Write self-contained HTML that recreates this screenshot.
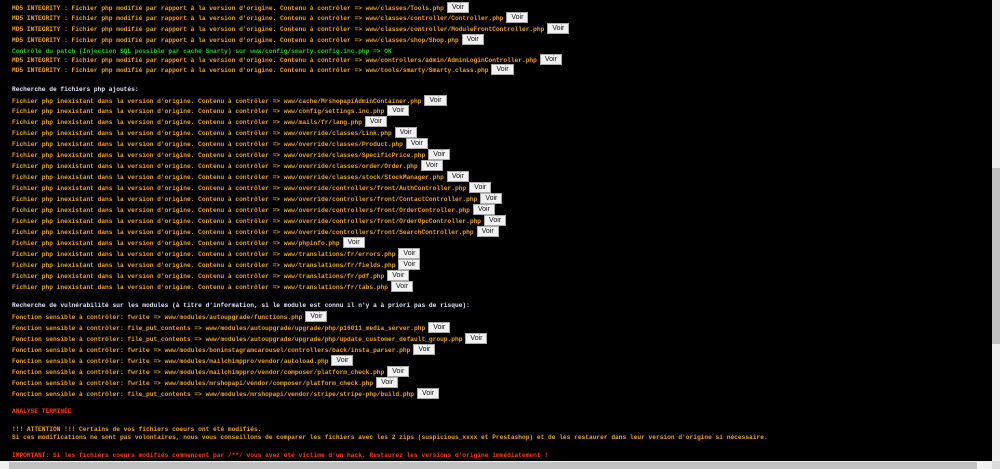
<!DOCTYPE html>
<html><head><meta charset="utf-8"><style>
html,body{margin:0;padding:0;background:#000;width:1000px;height:469px;overflow:hidden;}
.l{position:absolute;left:12px;height:11px;line-height:11px;font-family:"Liberation Mono",monospace;font-weight:bold;font-size:6.21px;white-space:pre;color:#f0a020;}
.g{color:#1fcc1f}.h{color:#dfe6ff}.r{color:#ff3a10}
.b{display:inline-block;vertical-align:middle;margin-left:3px;height:9px;line-height:9px;padding:0 4px;background:#f2f2f2;border:1px solid #aaa;color:#111;font-family:"Liberation Sans",sans-serif;font-weight:normal;font-size:7px;position:relative;top:-1px}
#vs{position:absolute;left:992px;top:0;width:8px;height:461px;background:#f0f0f0}
#vt{position:absolute;left:992px;top:168px;width:8px;height:176px;background:#c2c2c2}
#hs{position:absolute;left:0;top:461px;width:992px;height:8px;background:#f0f0f0}
#ht{position:absolute;left:9px;top:462px;width:968px;height:7px;background:#c2c2c2}
#cn{position:absolute;left:992px;top:461px;width:8px;height:8px;background:#dcdcdc}
</style></head><body>
<div class="l" style="top:2.5px">MD5 INTEGRITY : Fichier php modifié par rapport à la version d'origine. Contenu à contrôler => www/classes/Tools.php<span class="b">Voir</span></div>
<div class="l" style="top:13.3px">MD5 INTEGRITY : Fichier php modifié par rapport à la version d'origine. Contenu à contrôler => www/classes/controller/Controller.php<span class="b">Voir</span></div>
<div class="l" style="top:24.1px">MD5 INTEGRITY : Fichier php modifié par rapport à la version d'origine. Contenu à contrôler => www/classes/controller/ModuleFrontController.php<span class="b">Voir</span></div>
<div class="l" style="top:34.9px">MD5 INTEGRITY : Fichier php modifié par rapport à la version d'origine. Contenu à contrôler => www/classes/shop/Shop.php<span class="b">Voir</span></div>
<div class="l g" style="top:45.5px">Contrôle du patch (Injection SQL possible par cache Smarty) sur www/config/smarty.config.inc.php => OK</div>
<div class="l" style="top:54.5px">MD5 INTEGRITY : Fichier php modifié par rapport à la version d'origine. Contenu à contrôler => www/controllers/admin/AdminLoginController.php<span class="b">Voir</span></div>
<div class="l" style="top:65.3px">MD5 INTEGRITY : Fichier php modifié par rapport à la version d'origine. Contenu à contrôler => www/tools/smarty/Smarty.class.php<span class="b">Voir</span></div>
<div class="l h" style="top:83.5px">Recherche de fichiers php ajoutés:</div>
<div class="l" style="top:95.5px">Fichier php inexistant dans la version d'origine. Contenu à contrôler => www/cache/MrshopapiAdminContainer.php<span class="b">Voir</span></div>
<div class="l" style="top:106.45px">Fichier php inexistant dans la version d'origine. Contenu à contrôler => www/config/settings.inc.php<span class="b">Voir</span></div>
<div class="l" style="top:117.4px">Fichier php inexistant dans la version d'origine. Contenu à contrôler => www/mails/fr/lang.php<span class="b">Voir</span></div>
<div class="l" style="top:128.35px">Fichier php inexistant dans la version d'origine. Contenu à contrôler => www/override/classes/Link.php<span class="b">Voir</span></div>
<div class="l" style="top:139.3px">Fichier php inexistant dans la version d'origine. Contenu à contrôler => www/override/classes/Product.php<span class="b">Voir</span></div>
<div class="l" style="top:150.25px">Fichier php inexistant dans la version d'origine. Contenu à contrôler => www/override/classes/SpecificPrice.php<span class="b">Voir</span></div>
<div class="l" style="top:161.2px">Fichier php inexistant dans la version d'origine. Contenu à contrôler => www/override/classes/order/Order.php<span class="b">Voir</span></div>
<div class="l" style="top:172.15px">Fichier php inexistant dans la version d'origine. Contenu à contrôler => www/override/classes/stock/StockManager.php<span class="b">Voir</span></div>
<div class="l" style="top:183.1px">Fichier php inexistant dans la version d'origine. Contenu à contrôler => www/override/controllers/front/AuthController.php<span class="b">Voir</span></div>
<div class="l" style="top:194.05px">Fichier php inexistant dans la version d'origine. Contenu à contrôler => www/override/controllers/front/ContactController.php<span class="b">Voir</span></div>
<div class="l" style="top:205px">Fichier php inexistant dans la version d'origine. Contenu à contrôler => www/override/controllers/front/OrderController.php<span class="b">Voir</span></div>
<div class="l" style="top:215.95px">Fichier php inexistant dans la version d'origine. Contenu à contrôler => www/override/controllers/front/OrderOpcController.php<span class="b">Voir</span></div>
<div class="l" style="top:226.9px">Fichier php inexistant dans la version d'origine. Contenu à contrôler => www/override/controllers/front/SearchController.php<span class="b">Voir</span></div>
<div class="l" style="top:237.85px">Fichier php inexistant dans la version d'origine. Contenu à contrôler => www/phpinfo.php<span class="b">Voir</span></div>
<div class="l" style="top:248.8px">Fichier php inexistant dans la version d'origine. Contenu à contrôler => www/translations/fr/errors.php<span class="b">Voir</span></div>
<div class="l" style="top:259.75px">Fichier php inexistant dans la version d'origine. Contenu à contrôler => www/translations/fr/fields.php<span class="b">Voir</span></div>
<div class="l" style="top:270.7px">Fichier php inexistant dans la version d'origine. Contenu à contrôler => www/translations/fr/pdf.php<span class="b">Voir</span></div>
<div class="l" style="top:281.65px">Fichier php inexistant dans la version d'origine. Contenu à contrôler => www/translations/fr/tabs.php<span class="b">Voir</span></div>
<div class="l h" style="top:299.5px">Recherche de vulnérabilité sur les modules (à titre d'information, si le module est connu il n'y a à priori pas de risque):</div>
<div class="l" style="top:311.5px">Fonction sensible à contrôler: fwrite => www/modules/autoupgrade/functions.php<span class="b">Voir</span></div>
<div class="l" style="top:322.5px">Fonction sensible à contrôler: file_put_contents => www/modules/autoupgrade/upgrade/php/p16011_media_server.php<span class="b">Voir</span></div>
<div class="l" style="top:333.5px">Fonction sensible à contrôler: file_put_contents => www/modules/autoupgrade/upgrade/php/update_customer_default_group.php<span class="b">Voir</span></div>
<div class="l" style="top:344.5px">Fonction sensible à contrôler: fwrite => www/modules/boninstagramcarousel/controllers/back/insta_parser.php<span class="b">Voir</span></div>
<div class="l" style="top:355.5px">Fonction sensible à contrôler: fwrite => www/modules/mailchimppro/vendor/autoload.php<span class="b">Voir</span></div>
<div class="l" style="top:366.5px">Fonction sensible à contrôler: fwrite => www/modules/mailchimppro/vendor/composer/platform_check.php<span class="b">Voir</span></div>
<div class="l" style="top:377.5px">Fonction sensible à contrôler: fwrite => www/modules/mrshopapi/vendor/composer/platform_check.php<span class="b">Voir</span></div>
<div class="l" style="top:388.5px">Fonction sensible à contrôler: file_put_contents => www/modules/mrshopapi/vendor/stripe/stripe-php/build.php<span class="b">Voir</span></div>
<div class="l r" style="top:405.5px">ANALYSE TERMINÉE</div>
<div class="l" style="top:424px">!!! ATTENTION !!! Certains de vos fichiers coeurs ont été modifiés.</div>
<div class="l" style="top:432px">Si ces modifications ne sont pas volontaires, nous vous conseillons de comparer les fichiers avec les 2 zips (suspicious_xxxx et Prestashop) et de les restaurer dans leur version d'origine si nécessaire.</div>
<div class="l r" style="top:449.5px">IMPORTANT: Si les fichiers coeurs modifiés commencent par /**/ vous avez été victime d'un hack. Restaurez les versions d'origine immédiatement !</div>
<div id="vs"></div><div id="vt"></div><div id="hs"></div><div id="ht"></div><div id="cn"></div>
</body></html>
